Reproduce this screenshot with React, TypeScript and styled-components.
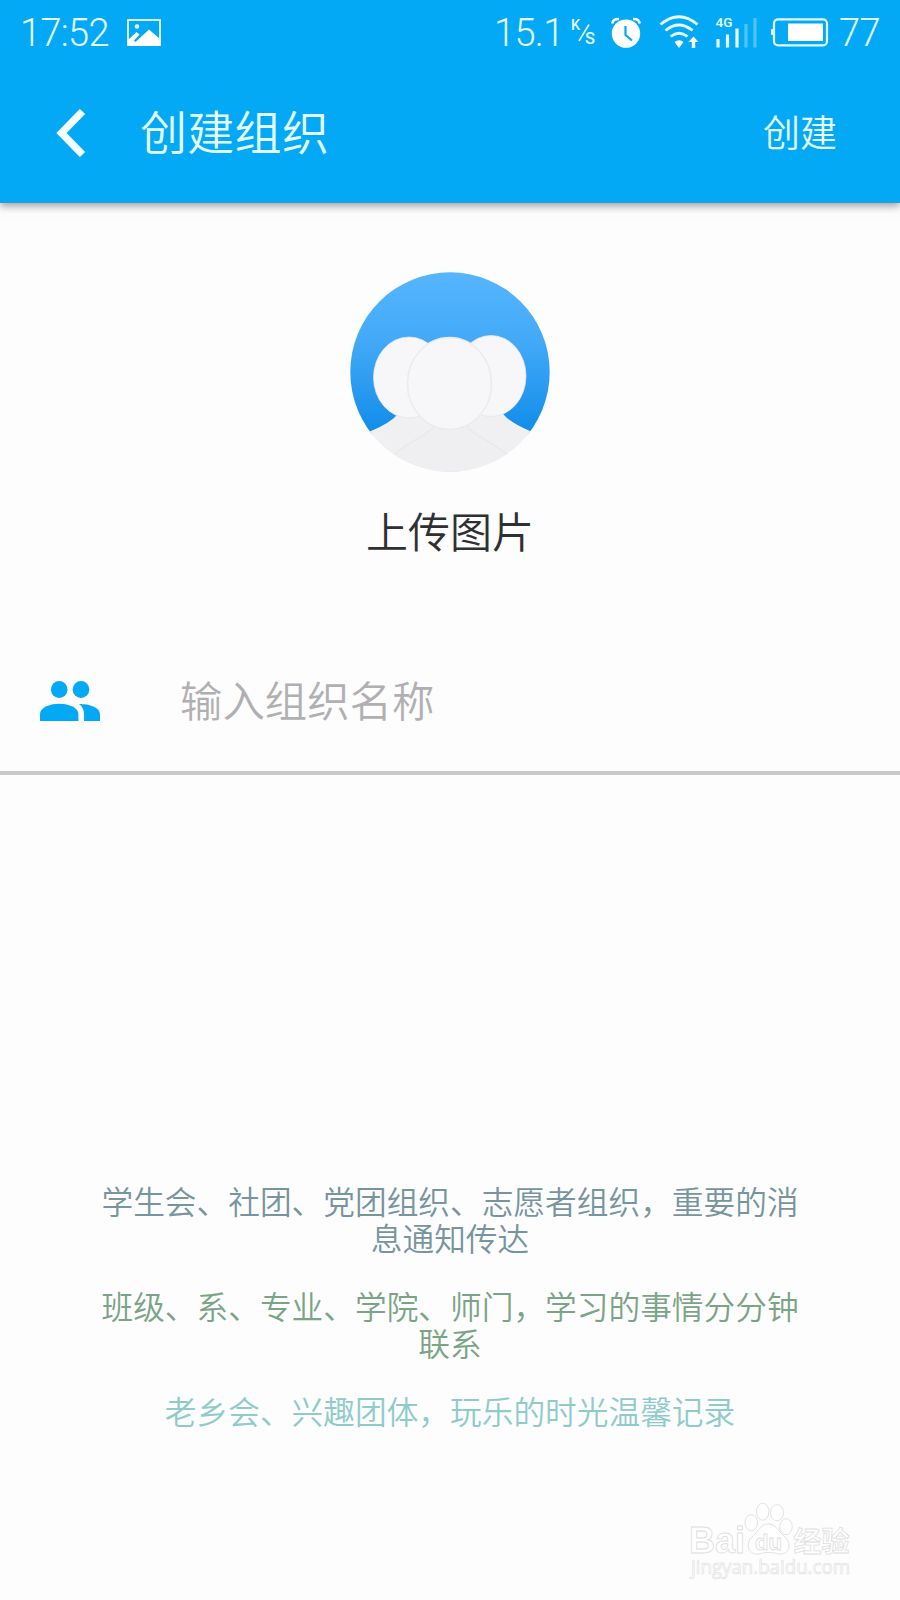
import React from 'react';
import styled, { createGlobalStyle } from 'styled-components';

const GlobalStyle = createGlobalStyle`
  * { box-sizing: border-box; }
  html, body { margin: 0; padding: 0; background: #fdfdfd; }
  body { font-family: "Noto Sans CJK SC", "Noto Sans", sans-serif; }
`;

const Screen = styled.div`
  position: relative;
  width: 900px;
  height: 1600px;
  overflow: hidden;
  display: flex;
  flex-direction: column;
  background: #fdfdfd;
`;

const Header = styled.header`
  flex: none;
  height: 203px;
  background: #03a9f5;
  color: #e4fdff;
  border-bottom: 1px solid #2f9bcb;
  box-shadow: 0 3px 8px rgba(60, 60, 80, 0.5);
  display: flex;
  flex-direction: column;
`;

const StatusBar = styled.div`
  height: 64px;
  padding: 1px 20px 0 20px;
  display: flex;
  align-items: center;
  justify-content: space-between;
  font-family: Roboto, sans-serif;
  font-weight: 300;
`;

const StatusGroup = styled.div`
  display: flex;
  align-items: center;
`;

const StatusText = styled.span<{ $width: number; $gap?: number }>`
  width: ${(p) => p.$width}px;
  margin-left: ${(p) => p.$gap ?? 0}px;
  font-size: 38px;
  line-height: 64px;
  letter-spacing: -0.7px;
  white-space: nowrap;
`;

const StatusIcon = styled.svg<{ $gap: number }>`
  display: block;
  height: 64px;
  margin-left: ${(p) => p.$gap}px;
`;

const TitleBar = styled.div`
  height: 138px;
  padding: 0 63px 0 56px;
  display: flex;
  align-items: center;
`;

const BackButton = styled.button`
  width: 30px;
  height: 48px;
  padding: 0;
  border: 0;
  background: none;
  svg { display: block; }
`;

const Title = styled.h1`
  flex: 1;
  margin: 0 0 6px 54px;
  font-size: 47px;
  line-height: 60px;
  letter-spacing: 0.3px;
  font-weight: 350;
`;

const Action = styled.button`
  margin-bottom: 4px;
  padding: 0;
  border: 0;
  background: none;
  color: inherit;
  font: 350 37px/50px "Noto Sans CJK SC", sans-serif;
`;

const Upload = styled.section`
  height: 427px;
  padding-top: 69px;
  display: flex;
  flex-direction: column;
  align-items: center;
`;

const UploadLabel = styled.span`
  margin-top: 28px;
  font-size: 42px;
  line-height: 60px;
  font-weight: 350;
  color: #303032;
`;

const NameField = styled.label`
  height: 145px;
  padding: 0 40px;
  border-bottom: 4px solid #c9c9c9;
  display: flex;
  align-items: center;
`;

const NameInput = styled.input`
  flex: 1;
  height: 64px;
  margin: 0 0 3px 80px;
  padding: 0;
  border: 0;
  outline: 0;
  background: none;
  font: 350 42.4px/64px "Noto Sans CJK SC", sans-serif;
  &::placeholder { color: #b0b0b2; opacity: 1; }
`;

const Hints = styled.section`
  margin-top: 407px;
  padding: 0 98px;
  display: flex;
  flex-direction: column;
  gap: 32px;
`;

const Hint = styled.p<{ $color: string }>`
  margin: 0;
  font-size: 31.7px;
  line-height: 36.5px;
  font-weight: 350;
  text-align: center;
  color: ${(p) => p.$color};
`;

const Watermark = styled.svg`
  position: absolute;
  right: 45px;
  bottom: 10px;
`;

const GroupAvatar = () => (
  <svg width="200" height="200" viewBox="0 0 200 200">
    <defs>
      <linearGradient id="sky" x1="0" y1="0" x2="0" y2="1">
        <stop offset="0" stopColor="#56b6fe" />
        <stop offset="0.35" stopColor="#42a9f8" />
        <stop offset="0.8" stopColor="#118de9" />
        <stop offset="0.82" stopColor="#f0eff2" />
      </linearGradient>
      <clipPath id="disc"><circle cx="100" cy="100" r="99.7" /></clipPath>
    </defs>
    <g clipPath="url(#disc)">
      <rect width="200" height="200" fill="url(#sky)" />
      <path d="M0 170 L21 159 Q40 151 47 143 L50 139 H151 L154 143 Q161 151 180 159 L200 170 V200 H0Z" fill="#f0eff2" />
      <path d="M43 184 C54 171 79 164 85 153 H116 C122 164 147 171 158 184 L160 200 H40Z" fill="#efeef1" stroke="#e8e7ea" strokeWidth="1.3" />
      <ellipse cx="59" cy="105.5" rx="35.5" ry="40.5" fill="#f7f6f9" stroke="#e6e5e8" strokeWidth="0.8" />
      <ellipse cx="141" cy="104" rx="35" ry="40.5" fill="#f7f6f9" stroke="#e6e5e8" strokeWidth="0.8" />
      <ellipse cx="99.5" cy="111.5" rx="42" ry="46" fill="#f7f6f9" stroke="#ebeaed" strokeWidth="1.6" />
    </g>
  </svg>
);

const PeopleIcon = () => (
  <svg width="60" height="40" viewBox="0 0 60 40" fill="#03a9f4">
    <ellipse cx="19.2" cy="8.5" rx="8.3" ry="8.5" />
    <ellipse cx="41" cy="8.5" rx="8.3" ry="8.5" />
    <path d="M0 40V33C0 26 11 22.8 19.2 22.8S38.4 26 38.4 33V40Z" />
    <path d="M39 23C48 22.7 60 26 60 33V40H44V33C44 28.5 42 25.2 39 23Z" />
  </svg>
);

const hints = [
  { color: '#76959e', text: '学生会、社团、党团组织、志愿者组织，重要的消息通知传达' },
  { color: '#7aa486', text: '班级、系、专业、学院、师门，学习的事情分分钟联系' },
  { color: '#8fcbcb', text: '老乡会、兴趣团体，玩乐的时光温馨记录' },
];

export default function App() {
  return (
    <>
      <GlobalStyle />
      <Screen>
        <Header>
          <StatusBar>
            <StatusGroup>
              <StatusText $width={92}>17:52</StatusText>
              <StatusIcon $gap={15} width="34" viewBox="0 0 34 64">
                <rect x="1" y="19" width="32" height="25" fill="none" stroke="#eaffff" strokeWidth="1.8" />
                <circle cx="10" cy="25.5" r="2.3" fill="#eaffff" />
                <path d="M1 39 L9.5 31 L12.5 33.5 L7 39.5 L8.5 41 L22 28.5 L33 38V45H1Z" fill="#fff" />
              </StatusIcon>
            </StatusGroup>
            <StatusGroup>
              <StatusText $width={70}>15.1</StatusText>
              <StatusIcon $gap={7} width="26" viewBox="0 0 26 64" fill="#e4fdff" fontFamily="Roboto, sans-serif" fontWeight="500">
                <text x="0" y="28.5" fontSize="14.5">K</text>
                <text x="14" y="43" fontSize="16.5">S</text>
                <path d="M8 40 18 23.5" stroke="#e4fdff" strokeWidth="1.6" />
              </StatusIcon>
              <StatusIcon $gap={14} width="30" viewBox="0 0 30 64">
                <circle cx="15" cy="32.6" r="14.2" fill="#fff" />
                <path d="M1.3 22.5Q2 17.5 8 18M28.7 22.5Q28 17.5 22 18" stroke="#fff" strokeWidth="2.5" fill="none" />
                <path d="M14.5 25V34L21 39.5" stroke="#03a9f5" strokeWidth="2.2" fill="none" />
              </StatusIcon>
              <StatusIcon $gap={18} width="41" viewBox="0 0 41 64">
                <g fill="none" stroke="#eaffff" strokeWidth="2.7">
                  <path d="M1.5 23.5Q20 8 38.5 23.5" />
                  <path d="M6.5 29.5Q20 18.5 33.5 29.5" />
                  <path d="M11.5 35.5Q20 29 28.5 35.5" />
                </g>
                <path d="M15.5 41Q20 37.5 24.5 41L20 47Z" fill="#fff" />
                <path d="M34.5 35.5 39.5 41H36.2V47H32.8V41H29.5Z" fill="#fff" />
              </StatusIcon>
              <StatusIcon $gap={15} width="45" viewBox="0 0 45 64">
                <text x="0.5" y="26.3" fontSize="13.5" fontFamily="Roboto, sans-serif" fontWeight="500" fill="#e4fdff">4G</text>
                <path d="M3 38V46.5M12.5 33.5V46.5M22 27.5V46.5" stroke="#eaffff" strokeWidth="3.2" />
                <path d="M31 23V46.5M40 17V46.5" stroke="#4fc5fb" strokeWidth="3.2" />
              </StatusIcon>
              <StatusIcon $gap={11} width="58" viewBox="0 0 58 64">
                <rect x="3" y="18.3" width="53" height="26" rx="4" fill="none" stroke="#e4fdff" strokeWidth="2.2" />
                <rect x="0" y="28" width="3" height="6" rx="1" fill="#e4fdff" />
                <rect x="17" y="22.5" width="35" height="17.5" fill="#fff" />
              </StatusIcon>
              <StatusText $width={41} $gap={10}>77</StatusText>
            </StatusGroup>
          </StatusBar>
          <TitleBar>
            <BackButton aria-label="返回">
              <svg width="30" height="48" viewBox="0 0 30 48">
                <path d="M26.5 2.5 5.5 24 26.5 45.5" fill="none" stroke="#f4ffff" strokeWidth="7.4" />
              </svg>
            </BackButton>
            <Title>创建组织</Title>
            <Action>创建</Action>
          </TitleBar>
        </Header>
        <Upload>
          <GroupAvatar />
          <UploadLabel>上传图片</UploadLabel>
        </Upload>
        <NameField>
          <PeopleIcon />
          <NameInput placeholder="输入组织名称" />
        </NameField>
        <Hints>
          {hints.map((h) => (
            <Hint key={h.color} $color={h.color}>{h.text}</Hint>
          ))}
        </Hints>
        <Watermark width="170" height="90" viewBox="0 0 170 90">
          <g fill="#fff" stroke="#dedede" strokeWidth="0.9">
            <text x="4" y="53.3" fontFamily="Liberation Sans, sans-serif" fontWeight="700" fontSize="37" textLength="56" lengthAdjust="spacingAndGlyphs">Bai</text>
            <ellipse cx="66.3" cy="22.7" rx="6.2" ry="8" />
            <ellipse cx="77.7" cy="11.7" rx="6.2" ry="8.5" />
            <ellipse cx="92" cy="12.7" rx="6.5" ry="8" />
            <ellipse cx="101" cy="26.7" rx="6.2" ry="8" />
            <path d="M83 24C91 24 93 31 99 36C108 44 104 55 94 54C87 52 80 52 74 54C63 55 60 44 67 37C73 32 76 24 83 24Z" />
            <text x="70" y="49.5" fontFamily="Liberation Sans, sans-serif" fontWeight="700" fontSize="22" strokeWidth="0.8">du</text>
            <text x="108.5" y="51.5" fontFamily="Noto Sans CJK SC, sans-serif" fontWeight="700" fontSize="28" strokeWidth="0.8">经验</text>
            <text x="6" y="74.3" fontFamily="Open Sans, sans-serif" fontSize="20" stroke="#e2e2e2" strokeWidth="0.7" textLength="159" lengthAdjust="spacingAndGlyphs">jingyan.baidu.com</text>
          </g>
        </Watermark>
      </Screen>
    </>
  );
}
